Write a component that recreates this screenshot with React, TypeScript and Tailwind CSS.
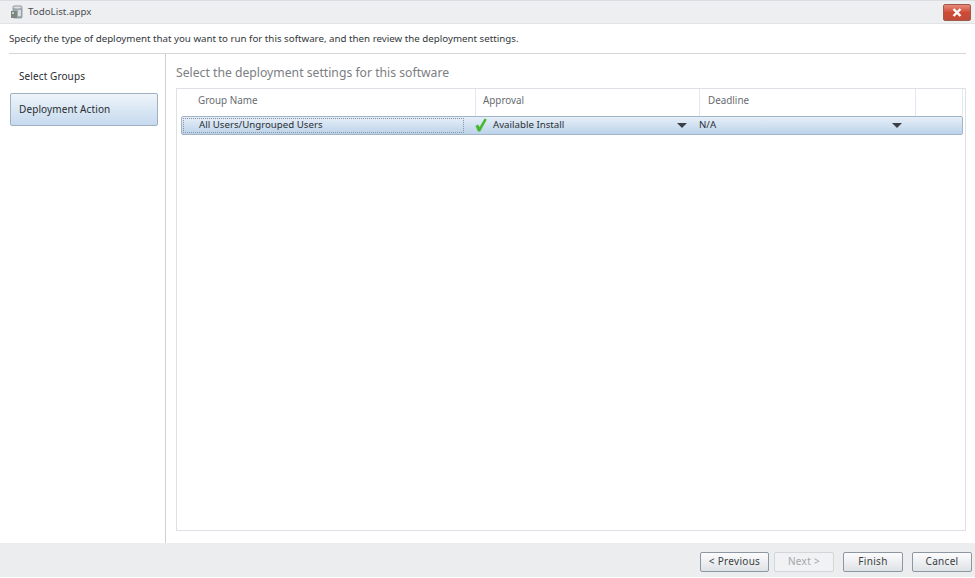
const font = "font-['Noto_Sans','Open_Sans',sans-serif]";

function Arrow() {
  return <div className="w-0 h-0 border-l-[5px] border-r-[5px] border-t-[5px] border-l-transparent border-r-transparent border-t-[#3c4046]" />;
}

function AppIcon() {
  return (
    <svg width="14" height="14" viewBox="0 0 14 14" className="shrink-0">
      <rect x="3" y="1" width="9" height="12" rx="1" fill="#a6aeb5" stroke="#7d848b" strokeWidth="0.7" />
      <ellipse cx="7.5" cy="2.5" rx="4.5" ry="1.4" fill="#dde1e4" stroke="#858c93" strokeWidth="0.5" />
      <rect x="1" y="6" width="6" height="7" fill="#7c877d" />
      <rect x="2" y="7" width="2" height="2" fill="#c3ced3" />
      <rect x="8" y="5" width="3" height="6" fill="#d8dee2" />
    </svg>
  );
}

function FooterButton({ label, width, disabled }: { label: string; width: string; disabled?: boolean }) {
  return (
    <div
      className={
        disabled
          ? `${width} h-[20px] flex items-center justify-center rounded-[2px] border border-[#d3d5d8] bg-[#f1f2f3] text-[#a4a6a9] text-[10px] tracking-[0.3px]`
          : `${width} h-[20px] flex items-center justify-center rounded-[2px] border border-[#8d97a2] bg-gradient-to-b from-[#fcfcfd] to-[#dfe2e6] text-[#3a3e43] text-[10px] tracking-[0.3px]`
      }
    >
      {label}
    </div>
  );
}

export default function App() {
  return (
    <div className={`${font} w-[975px] h-[578px] bg-white flex flex-col overflow-hidden text-[#3a3e42]`}>
      {/* Title bar */}
      <div className="h-[24px] shrink-0 bg-[#eeeff1] border-t border-t-[#dcdde0] border-b border-b-[#e2e3e5] flex items-center pl-[10px] pr-[4px]">
        <AppIcon />
        <span className="ml-[4px] text-[9.75px] text-[#4c5055]">TodoList.appx</span>
        <div className="ml-auto w-[28px] h-[17px] rounded-[2px] border border-[#a05a4c] bg-gradient-to-b from-[#e58a78] via-[#cf4a36] to-[#c04a38] flex items-center justify-center">
          <svg width="10" height="9" viewBox="0 0 10 9">
            <path d="M1.5 1 L8.5 8 M8.5 1 L1.5 8" stroke="#ffffff" strokeWidth="2.4" />
          </svg>
        </div>
      </div>

      {/* Description */}
      <div className="h-[29px] shrink-0 px-[9px] pt-px flex items-center">
        <span className="text-[9.74px] text-[#33373b] whitespace-nowrap">
          Specify the type of deployment that you want to run for this software, and then review the deployment settings.
        </span>
      </div>

      <div className="flex-1 flex flex-col min-h-0">
        <div className="h-px shrink-0 mx-[9px] bg-[#d5d6d8]" />
        <div className="flex-1 flex min-h-0">
          {/* Left nav */}
          <div className="w-[166px] shrink-0 border-r border-[#cfd0d2] pl-[10px] pr-[7px] pt-[16px]">
            <div className="h-[13px] pl-[9px] flex items-center text-[10px] tracking-[0.1px] text-[#2a2d31]">Select Groups</div>
            <div className="mt-[10px] h-[33px] pl-[8px] flex items-center rounded-[2px] border border-[#9fb0c2] bg-gradient-to-b from-[#eef4fa] to-[#c6daee] text-[10px] tracking-[0.1px] text-[#2a2d31]">
              Deployment Action
            </div>
          </div>

          {/* Settings */}
          <div className="flex-1 flex flex-col pl-[10px] pr-[9px] pb-[12px]">
            <div className="h-[34px] shrink-0 flex items-center pt-[5px] text-[12.2px] text-[#7b7e82]">
              Select the deployment settings for this software
            </div>
            <div className="flex-1 border border-[#dfe0e6] flex flex-col">
              <div className="h-[27px] shrink-0 flex text-[9.85px] text-[#666b70]">
                <div className="w-[299px] pl-[21px] pb-[4px] flex items-center border-r border-[#e2e8ef]">Group Name</div>
                <div className="w-[224px] pl-[7px] pb-[4px] flex items-center border-r border-[#e2e8ef]">Approval</div>
                <div className="w-[216px] pl-[8px] pb-[4px] flex items-center border-r border-[#e2e8ef]">Deadline</div>
                <div className="w-[47px] border-r border-[#e2e8ef]" />
              </div>
              <div className="ml-[4px] mr-[2px] h-[19px] shrink-0 rounded-[2px] border border-[#a3b4c6] bg-gradient-to-b from-[#e6eff8] to-[#bcd3ea] flex items-center text-[9.7px] text-[#2c2f33]">
                <div className="w-[281px] h-[15px] ml-px pl-[15px] flex items-center border border-dotted border-[#8a95a1] shrink-0">
                  All Users/Ungrouped Users
                </div>
                <div className="w-[224px] ml-[11px] flex items-center shrink-0">
                  <svg width="12" height="14" viewBox="0 0 12 14" className="shrink-0">
                    <path d="M0.5 8 L3 6.5 L4.6 9 L9.6 0.5 L11.8 1.5 L5.2 13.5 L3 13.5 Z" fill="#45b82f" />
                  </svg>
                  <span className="ml-[6px]">Available Install</span>
                  <div className="ml-auto mr-[12px]"><Arrow /></div>
                </div>
                <div className="w-[209px] flex items-center shrink-0">
                  <span>N/A</span>
                  <div className="ml-auto mr-[6px]"><Arrow /></div>
                </div>
              </div>
            </div>
          </div>
        </div>
      </div>

      {/* Footer */}
      <div className="h-[34px] shrink-0 mb-px bg-[#ecedef] flex items-center justify-end pr-[3px] pt-[3px]">
        <FooterButton label="< Previous" width="w-[69px]" />
        <div className="w-[5px]" />
        <FooterButton label="Next >" width="w-[60px]" disabled />
        <div className="w-[9px]" />
        <FooterButton label="Finish" width="w-[60px]" />
        <div className="w-[9px]" />
        <FooterButton label="Cancel" width="w-[60px]" />
      </div>
    </div>
  );
}
